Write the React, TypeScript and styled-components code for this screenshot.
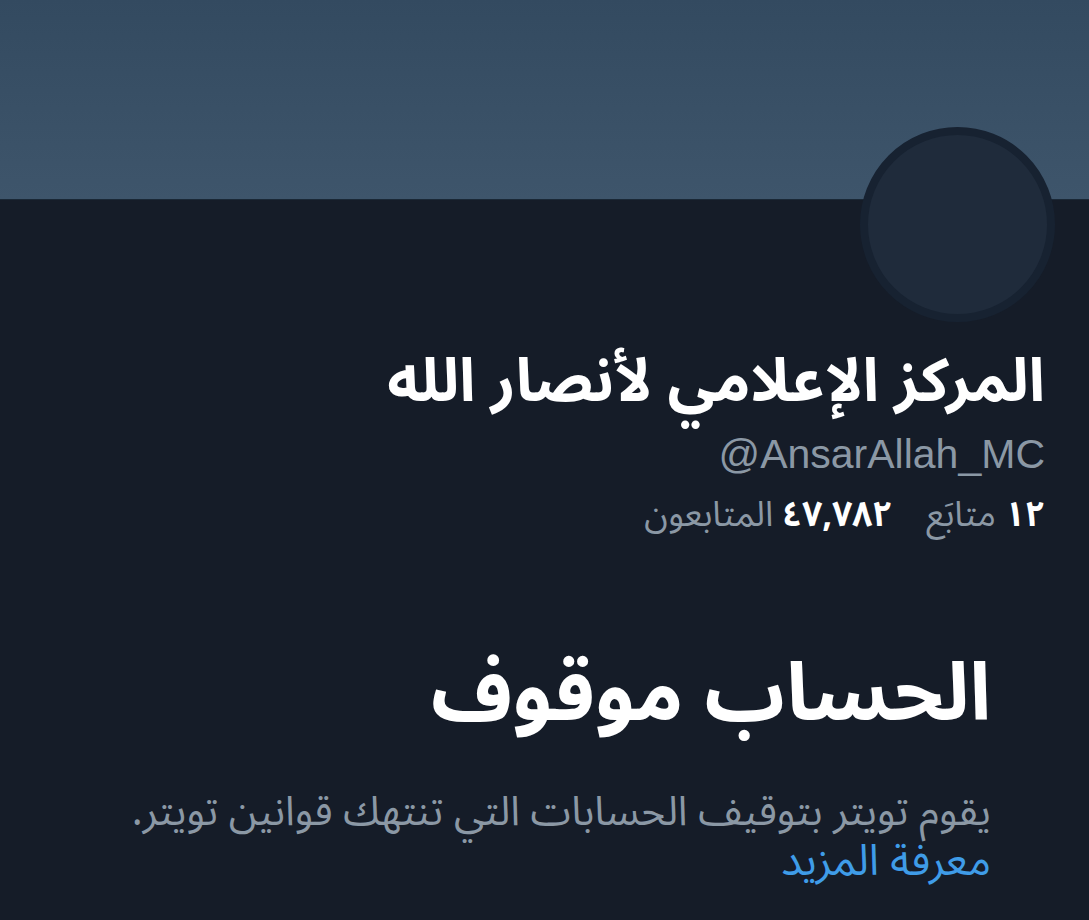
import React from "react";
import styled, { createGlobalStyle } from "styled-components";

const Global = createGlobalStyle`
  html, body { margin: 0; padding: 0; background: #151c28; }
  body { width: 1089px; height: 920px; overflow: hidden; }
`;

const arabic = `"Noto Sans Arabic", "DejaVu Sans", sans-serif`;

const Page = styled.div`
  width: 1089px;
  height: 920px;
  background: #151c28;
  direction: rtl;
  display: flex;
  flex-direction: column;
  font-family: ${arabic};
`;

const Banner = styled.div`
  height: 200px;
  flex-shrink: 0;
  background: linear-gradient(180deg, #334a60 0%, #3e556b 100%);
  border-bottom: 1px solid #1a2836;
  box-sizing: border-box;
`;

const Profile = styled.section`
  display: flex;
  flex-direction: column;
  align-items: flex-start;
  padding: 0 44px 0 0;
`;

const Avatar = styled.div`
  width: 195px;
  height: 195px;
  box-sizing: border-box;
  border-radius: 50%;
  border: 8px solid #172231;
  background: #1f2b3b;
  margin: -73px -10px 0 0;
`;

const Name = styled.h1`
  margin: 25px 0 0 0;
  color: #ffffff;
  font-size: 60px;
  font-weight: 700;
  line-height: 70px;
  white-space: nowrap;
`;

const Handle = styled.div`
  direction: ltr;
  margin-top: 13px;
  color: #8b98a5;
  font-family: "Liberation Sans", Arial, sans-serif;
  font-size: 41px;
  line-height: 48px;
`;

const Stats = styled.div`
  display: flex;
  gap: 34px;
  margin-top: 15px;
  font-size: 35px;
  line-height: 44px;
`;

const Stat = styled.span`
  color: #8b98a5;
  display: inline-flex;
  gap: 9px;
`;

const Count = styled.b`
  color: #ffffff;
  font-weight: 700;
`;

const Suspended = styled.section`
  display: flex;
  flex-direction: column;
  align-items: flex-start;
  padding: 0 98px 0 0;
  margin-top: 108px;
`;

const Title = styled.h2`
  margin: 0;
  color: #ffffff;
  font-size: 80px;
  font-weight: 700;
  line-height: 100px;
  white-space: nowrap;
`;

const Body = styled.p`
  margin: 42px 0 0 0;
  color: #8b98a5;
  font-size: 41px;
  line-height: 50px;
  white-space: nowrap;
`;

const More = styled.a`
  color: #3f9ce8;
  font-size: 43px;
  text-decoration: none;
  display: block;
`;

export default function App() {
  return (
    <>
      <Global />
      <Page>
        <Banner />
        <Profile>
          <Avatar />
          <Name>المركز الإعلامي لأنصار الله</Name>
          <Handle>@AnsarAllah_MC</Handle>
          <Stats>
            <Stat>
              <Count>١٢</Count>متابَع
            </Stat>
            <Stat>
              <Count>٤٧,٧٨٢</Count>المتابعون
            </Stat>
          </Stats>
        </Profile>
        <Suspended>
          <Title>الحساب موقوف</Title>
          <Body>
            يقوم تويتر بتوقيف الحسابات التي تنتهك قوانين تويتر.
            <More href="#">معرفة المزيد</More>
          </Body>
        </Suspended>
      </Page>
    </>
  );
}
